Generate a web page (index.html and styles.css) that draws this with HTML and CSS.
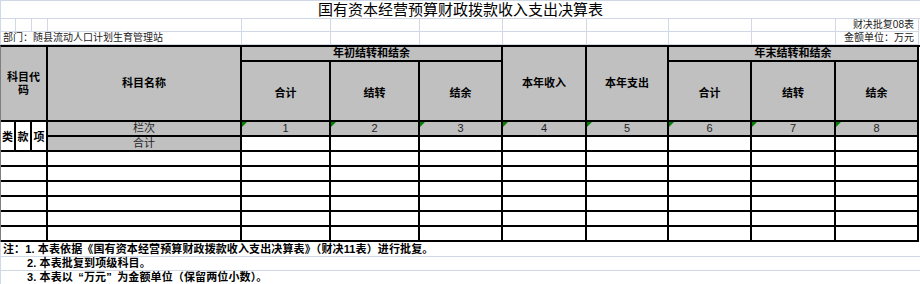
FILE: index.html
```html
<!DOCTYPE html>
<html lang="zh-CN">
<head>
<meta charset="utf-8">
<title>国有资本经营预算财政拨款收入支出决算表</title>
<link rel="stylesheet" href="styles.css">
</head>
<body>
<div class="sheet">
  <div class="title">国有资本经营预算财政拨款收入支出决算表</div>
  <div class="meta">
    <div class="g"></div><div class="g"></div><div class="g"></div><div class="g"></div>
    <div class="g"></div><div class="g"></div><div class="g"></div><div class="g"></div>
    <div class="g"></div><div class="g"></div><div class="g"></div>
    <div class="g right">财决批复08表</div>
    <div class="g dept">部门：随县流动人口计划生育管理站</div>
    <div class="g"></div><div class="g"></div><div class="g"></div><div class="g"></div>
    <div class="g"></div><div class="g"></div><div class="g"></div>
    <div class="g right">金额单位：万元</div>
  </div>

  <div class="tbl">
    <div class="c h code">科目代<br>码</div>
    <div class="c h name">科目名称</div>
    <div class="c h grp1">年初结转和结余</div>
    <div class="c h in">本年收入</div>
    <div class="c h out">本年支出</div>
    <div class="c h grp2">年末结转和结余</div>
    <div class="c h sub s5">合计</div>
    <div class="c h sub s6">结转</div>
    <div class="c h sub s7">结余</div>
    <div class="c h sub s10">合计</div>
    <div class="c h sub s11">结转</div>
    <div class="c h sub s12">结余</div>

    <div class="c kx k1">类</div>
    <div class="c kx k2">款</div>
    <div class="c kx k3">项</div>
    <div class="c g2 plain">栏次</div>
    <div class="c g2 plain tri">1</div>
    <div class="c g2 plain tri">2</div>
    <div class="c g2 plain tri">3</div>
    <div class="c g2 plain tri">4</div>
    <div class="c g2 plain tri">5</div>
    <div class="c g2 plain tri">6</div>
    <div class="c g2 plain tri">7</div>
    <div class="c g2 plain tri">8</div>

    <div class="c g2 plain">合计</div>
    <div class="c"></div><div class="c"></div><div class="c"></div><div class="c"></div>
    <div class="c"></div><div class="c"></div><div class="c"></div><div class="c"></div>

    <div class="c wide"></div><div class="c"></div>
    <div class="c"></div><div class="c"></div><div class="c"></div><div class="c"></div>
    <div class="c"></div><div class="c"></div><div class="c"></div><div class="c"></div>

    <div class="c wide"></div><div class="c"></div>
    <div class="c"></div><div class="c"></div><div class="c"></div><div class="c"></div>
    <div class="c"></div><div class="c"></div><div class="c"></div><div class="c"></div>

    <div class="c wide"></div><div class="c"></div>
    <div class="c"></div><div class="c"></div><div class="c"></div><div class="c"></div>
    <div class="c"></div><div class="c"></div><div class="c"></div><div class="c"></div>

    <div class="c wide"></div><div class="c"></div>
    <div class="c"></div><div class="c"></div><div class="c"></div><div class="c"></div>
    <div class="c"></div><div class="c"></div><div class="c"></div><div class="c"></div>

    <div class="c wide"></div><div class="c"></div>
    <div class="c"></div><div class="c"></div><div class="c"></div><div class="c"></div>
    <div class="c"></div><div class="c"></div><div class="c"></div><div class="c"></div>

    <div class="c wide"></div><div class="c"></div>
    <div class="c"></div><div class="c"></div><div class="c"></div><div class="c"></div>
    <div class="c"></div><div class="c"></div><div class="c"></div><div class="c"></div>
  </div>

  <div class="notes">
    <div class="note first">注：1. 本表依据《国有资本经营预算财政拨款收入支出决算表》（财决11表）进行批复。</div>
    <div class="note indent">2. 本表批复到项级科目。</div>
    <div class="note indent">3. 本表以<span class="q ql">“</span>万元<span class="q qr">”</span>为金额单位（保留两位小数）。</div>
  </div>
</div>
</body>
</html>
```

FILE: styles.css
```css
* { box-sizing: border-box; }

html, body {
  margin: 0;
  padding: 0;
  background: #ffffff;
}

body {
  font-family: "Liberation Sans", "Noto Sans CJK SC", sans-serif;
  color: #000000;
}

.sheet {
  width: 920px;
  height: 284px;
  overflow: hidden;
}

.title {
  height: 19px;
  border-top: 1px solid #d0d7e5;
  border-bottom: 1px solid #d0d7e5;
  border-left: 1px solid #d0d7e5;
  font-size: 15px;
  line-height: 17px;
  text-align: center;
}

.meta {
  display: grid;
  grid-template-columns: 15px 16px 16px 194px 89px 89px 83px 84px 82px 83px 84px 83px;
  grid-template-rows: 13px 13px;
  border-left: 1px solid #d0d7e5;
}

.g {
  border-right: 1px solid #d0d7e5;
  border-bottom: 1px solid #d0d7e5;
  font-size: 10px;
  line-height: 12px;
  white-space: nowrap;
  color: #1a1a1a;
}

.g.right {
  text-align: right;
  padding-right: 4px;
}

.g.dept {
  grid-column: 1 / 5;
  padding-left: 2px;
}

.tbl {
  display: grid;
  grid-template-columns: 15px 16px 16px 194px 89px 89px 83px 84px 82px 83px 84px 83px;
  grid-template-rows: 15px 60px repeat(8, 15px);
  border-top: 2px solid #000000;
  border-left: 1px solid #7f7f7f;
}

.c {
  position: relative;
  border-right: 2px solid #000000;
  border-bottom: 2px solid #000000;
  display: flex;
  align-items: center;
  justify-content: center;
  text-align: center;
  font-size: 11px;
  line-height: 13px;
  background: #ffffff;
}

.h {
  background: #c0c0c0;
  font-weight: bold;
}

.g2 {
  background: #c0c0c0;
}

.plain {
  font-weight: normal;
  color: #1f1f1f;
}

.code { grid-column: 1 / 4; grid-row: 1 / 3; }
.name { grid-column: 4 / 5; grid-row: 1 / 3; }
.grp1 { grid-column: 5 / 8; grid-row: 1 / 2; }
.in   { grid-column: 8 / 9; grid-row: 1 / 3; }
.out  { grid-column: 9 / 10; grid-row: 1 / 3; }
.grp2 { grid-column: 10 / 13; grid-row: 1 / 2; }

.sub { grid-row: 2 / 3; padding-top: 4px; }
.s5  { grid-column: 5 / 6; }
.s6  { grid-column: 6 / 7; }
.s7  { grid-column: 7 / 8; }
.s10 { grid-column: 10 / 11; }
.s11 { grid-column: 11 / 12; }
.s12 { grid-column: 12 / 13; }

.kx {
  grid-row: 3 / 5;
  font-weight: bold;
  padding-top: 2px;
}
.k1 { grid-column: 1 / 2; }
.k2 { grid-column: 2 / 3; }
.k3 { grid-column: 3 / 4; }

.wide { grid-column: 1 / 4; }

.tri::before {
  content: "";
  position: absolute;
  left: 0;
  top: 0;
  width: 0;
  height: 0;
  border-top: 5px solid #008000;
  border-right: 5px solid transparent;
}

.notes {
  border-left: 1px solid #d0d7e5;
  width: 920px;
}

.note {
  height: 14px;
  border-bottom: 1px solid #d0d7e5;
  font-size: 11px;
  line-height: 13px;
  font-weight: bold;
  white-space: nowrap;
  padding-left: 2px;
  letter-spacing: 0.12px;
}

.note.first {
  height: 15px;
  padding-top: 1px;
}

.note.indent {
  padding-left: 26px;
}

.q {
  display: inline-block;
  width: 11px;
}

.ql { text-align: right; }
.qr { text-align: left; }
```
